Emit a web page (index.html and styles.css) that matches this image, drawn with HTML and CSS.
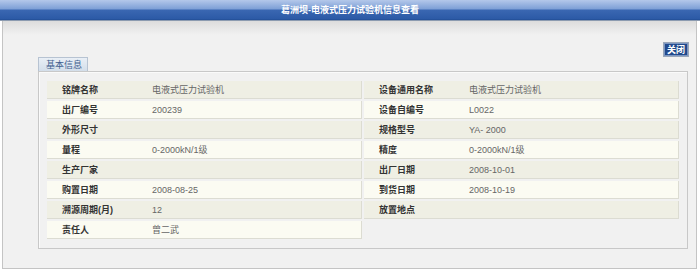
FILE: index.html
```html
<!DOCTYPE html>
<html lang="zh-CN">
  <head>
    <meta charset="utf-8">
    <title>葛洲坝-电液式压力试验机信息查看</title>
    <link rel="stylesheet" href="styles.css">
  </head>
<body>

  <div class="titlebar">葛洲坝-电液式压力试验机信息查看</div>

  <div class="panel">
    <div class="toolbar">
      <button class="btn-close">关闭</button>
    </div>

    <div class="tab">基本信息</div>
    <div class="box">
      <div class="col">
        <div class="row odd"><span class="lbl">铭牌名称</span><span class="val">电液式压力试验机</span></div>
        <div class="row"><span class="lbl">出厂编号</span><span class="val">200239</span></div>
        <div class="row odd"><span class="lbl">外形尺寸</span><span class="val"></span></div>
        <div class="row"><span class="lbl">量程</span><span class="val">0-2000kN/1级</span></div>
        <div class="row odd"><span class="lbl">生产厂家</span><span class="val"></span></div>
        <div class="row"><span class="lbl">购置日期</span><span class="val">2008-08-25</span></div>
        <div class="row odd"><span class="lbl">溯源周期(月)</span><span class="val">12</span></div>
        <div class="row"><span class="lbl">责任人</span><span class="val">曾二武</span></div>
      </div>
      <div class="col">
        <div class="row odd"><span class="lbl">设备通用名称</span><span class="val">电液式压力试验机</span></div>
        <div class="row"><span class="lbl">设备自编号</span><span class="val">L0022</span></div>
        <div class="row odd"><span class="lbl">规格型号</span><span class="val">YA- 2000</span></div>
        <div class="row"><span class="lbl">精度</span><span class="val">0-2000kN/1级</span></div>
        <div class="row odd"><span class="lbl">出厂日期</span><span class="val">2008-10-01</span></div>
        <div class="row"><span class="lbl">到货日期</span><span class="val">2008-10-19</span></div>
        <div class="row odd"><span class="lbl">放置地点</span><span class="val"></span></div>
      </div>
    </div>
  </div>

</body>
</html>
```

FILE: styles.css
```css
* { box-sizing: border-box; }
body { margin: 0; background: #fff; font-family: "Liberation Sans", "Noto Sans CJK SC", sans-serif; font-size: 9px; color: #333; }

.titlebar { height: 21px; line-height: 21px; text-align: center; color: #fff; font-weight: bold; font-size: 9px;
  background: linear-gradient(#b4c8ea 0, #7d9fd6 9px, #3a67b2 10px, #2c5aa6 19px, #1f4a90 20px, #8c9bb0 20px); }

.panel { height: 248px; margin: 0 3px 0 2px; padding: 22px 8px 0 35px; border: 1px solid #c4c4c4; border-top: none;
  background: linear-gradient(#dcdcdc 0, #f1f1f1 14px) #f1f1f1; }

.toolbar { display: flex; justify-content: flex-end; height: 14px; }
.btn-close { width: 24px; height: 13px; padding: 0; font: bold 9px "Noto Sans CJK SC", sans-serif; line-height: 11px; color: #fff;
  background: #21498c; border: 1px solid #7b96c2; outline: 1px solid #9aa6b8; cursor: pointer; }
.btn-close:hover { background: #2d5aa3; }

.tab { width: 50px; height: 14px; padding-left: 7px; line-height: 14px; color: #3f5f8f;
  background: linear-gradient(#e9eff6, #d3deea); border: 1px solid #b7c3d2; border-bottom: none; }

.box { display: grid; grid-template-columns: 1fr 1fr; column-gap: 2px; align-items: start;
  padding: 9px 8px 9px 8px; border: 1px solid #c8c8c8; box-shadow: inset 1px 1px #fafafa; }
.col { display: flex; flex-direction: column; gap: 2px; }
.row { display: flex; align-items: center; height: 18px; background: #fbfbf2;
  border-right: 1px solid #dcdcd2; border-bottom: 1px solid #dcdcd2; }
.row.odd { background: #efefe4; }
.lbl { width: 105px; padding-left: 15px; font-weight: bold; color: #333; }
.val { color: #666; }
```
